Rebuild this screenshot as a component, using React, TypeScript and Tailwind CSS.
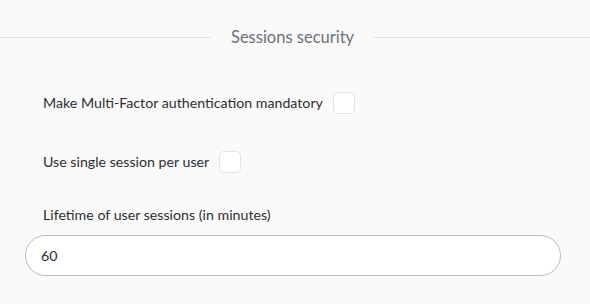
import { useState } from 'react'

export default function App() {
  const [mfa, setMfa] = useState(false)
  const [single, setSingle] = useState(false)
  const [lifetime, setLifetime] = useState('60')

  return (
    <div className="min-h-[304px] w-full bg-[#fafafa] font-['Lato','Noto_Sans',sans-serif] text-[#2b2f33]">
      <div className="flex items-center gap-[20px] pt-[26px]">
        <div className="h-px w-[211px] bg-[#e3e3e3]" />
        <h2 className="text-[16.5px] leading-[22px] text-[#6c727a]">Sessions security</h2>
        <div className="h-px flex-1 bg-[#e3e3e3]" />
      </div>

      <div className="px-[25px] pt-[44px]">
        <label className="flex items-center gap-[10px] pl-[18px]">
          <span className="text-[14.2px] leading-[22px]">Make Multi-Factor authentication mandatory</span>
          <input
            type="checkbox"
            checked={mfa}
            onChange={(e) => setMfa(e.target.checked)}
            className="h-[22px] w-[22px] appearance-none rounded-[5px] border border-[#e4e4e4] bg-white"
          />
        </label>

        <label className="mt-[37px] flex items-center gap-[10px] pl-[18px]">
          <span className="text-[14.2px] leading-[22px]">Use single session per user</span>
          <input
            type="checkbox"
            checked={single}
            onChange={(e) => setSingle(e.target.checked)}
            className="h-[22px] w-[22px] appearance-none rounded-[5px] border border-[#e4e4e4] bg-white"
          />
        </label>

        <label className="mt-[32px] block pl-[18px] text-[14.2px] leading-[20px]">
          Lifetime of user sessions (in minutes)
        </label>
        <input
          type="text"
          autoFocus
          value={lifetime}
          onChange={(e) => setLifetime(e.target.value)}
          className="mt-[10px] h-[41px] w-[536px] rounded-full border border-[#bdbdbd] bg-white px-[15px] text-[14.2px] text-[#2b2f33] outline-none caret-black"
        />
      </div>
    </div>
  )
}
